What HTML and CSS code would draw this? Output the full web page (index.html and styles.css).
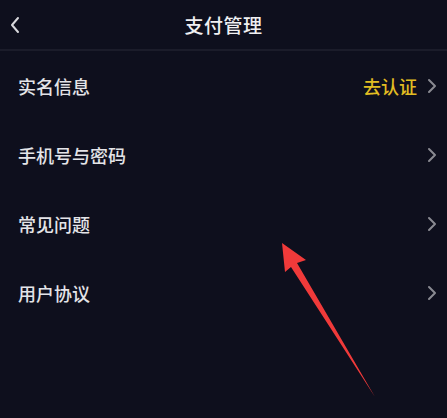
FILE: index.html
```html
<!DOCTYPE html>
<html lang="zh-CN">
<head>
    <meta charset="UTF-8">
    <meta name="viewport" content="width=device-width, initial-scale=1.0">
    <title>支付管理</title>
    <link rel="stylesheet" href="styles.css">
</head>
<body>
    <div class="page">
        <div class="top-bar">
            <svg class="back" width="12" height="18" viewBox="0 0 12 18">
                <path d="M9 2 L3 9 L9 16" fill="none" stroke="#d8d8dc" stroke-width="2" stroke-linecap="round" stroke-linejoin="round"/>
            </svg>
            <div class="title">支付管理</div>
        </div>

        <div class="menu">
            <div class="menu-item">
                <span class="label">实名信息</span>
                <span class="extra">去认证</span>
                <svg class="chevron" width="10" height="16" viewBox="0 0 10 16"><path d="M2 2 L8 8 L2 14" fill="none" stroke="#8a8a92" stroke-width="2" stroke-linecap="round" stroke-linejoin="round"/></svg>
            </div>
            <div class="menu-item">
                <span class="label">手机号与密码</span>
                <svg class="chevron" width="10" height="16" viewBox="0 0 10 16"><path d="M2 2 L8 8 L2 14" fill="none" stroke="#8a8a92" stroke-width="2" stroke-linecap="round" stroke-linejoin="round"/></svg>
            </div>
            <div class="menu-item">
                <span class="label">常见问题</span>
                <svg class="chevron" width="10" height="16" viewBox="0 0 10 16"><path d="M2 2 L8 8 L2 14" fill="none" stroke="#8a8a92" stroke-width="2" stroke-linecap="round" stroke-linejoin="round"/></svg>
            </div>
            <div class="menu-item">
                <span class="label">用户协议</span>
                <svg class="chevron" width="10" height="16" viewBox="0 0 10 16"><path d="M2 2 L8 8 L2 14" fill="none" stroke="#8a8a92" stroke-width="2" stroke-linecap="round" stroke-linejoin="round"/></svg>
            </div>
        </div>

        <!-- 标注箭头 -->
        <svg class="pointer" width="447" height="418" viewBox="0 0 447 418">
            <path d="M282 243 L306 260 L297 263 L375 397 L291 267 L285 272 Z" fill="#f03a3a"/>
        </svg>
    </div>
</body>
</html>
```

FILE: styles.css
```css
body {
    margin: 0;
    background-color: #0e0f1d;
    font-family: "Noto Sans CJK SC", "Noto Sans", sans-serif;
    color: #e6e6ea;
}
.page {
    position: relative;
    width: 447px;
    height: 418px;
    overflow: hidden;
}
.top-bar {
    height: 49px;
    display: flex;
    align-items: center;
    justify-content: center;
    position: relative;
    border-bottom: 2px solid #1b1c2a;
}
.back {
    position: absolute;
    left: 9px;
    top: 16px;
}
.title {
    font-size: 19px;
    font-weight: 500;
    color: #f0f0f2;
    letter-spacing: 0.5px;
}
.menu-item {
    height: 69px;
    display: flex;
    align-items: center;
    padding: 0 10px 0 18px;
}
.label {
    flex: 1;
    font-size: 18px;
    font-weight: 500;
    color: #e4e4e8;
}
.extra {
    font-size: 18px;
    font-weight: 500;
    color: #e2bd22;
    margin-right: 10px;
}
.chevron {
    display: block;
}
.pointer {
    position: absolute;
    left: 0;
    top: 0;
    pointer-events: none;
}
```
